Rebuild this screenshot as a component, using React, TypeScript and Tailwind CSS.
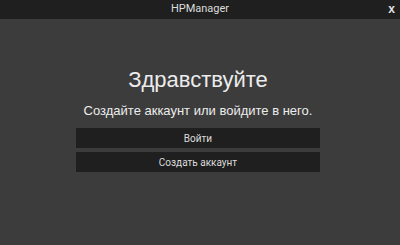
export default function App() {
  return (
    <div className="w-[400px] h-[245px] flex flex-col bg-[#3c3c3c] text-[#e8e8e8] font-['Liberation_Sans',Arial,sans-serif]">
      <div className="h-[19px] bg-[#1f1f1f] flex items-center justify-center relative">
        <span className="text-[11px] text-[#dcdcdc] font-['Roboto',sans-serif]">HPManager</span>
        <span className="absolute right-[5px] top-[3px] text-[12px] font-bold text-[#e0e0e0] leading-none">x</span>
      </div>
      <div className="flex flex-col items-center pt-[48px] pr-[4px]">
        <h1 className="text-[22px] leading-[26px] font-normal text-[#ececec]">Здравствуйте</h1>
        <p className="mt-[10px] text-[13px] leading-[16px] text-[#ececec]">Создайте аккаунт или войдите в него.</p>
        <div className="mt-[9px] w-[244px] flex flex-col gap-[4px] font-['Roboto',sans-serif]">
          <button className="h-[20px] bg-[#1f1f1f] text-[10px] text-[#dcdcdc]">Войти</button>
          <button className="h-[20px] bg-[#1f1f1f] text-[10px] text-[#dcdcdc]">Создать аккаунт</button>
        </div>
      </div>
    </div>
  );
}
